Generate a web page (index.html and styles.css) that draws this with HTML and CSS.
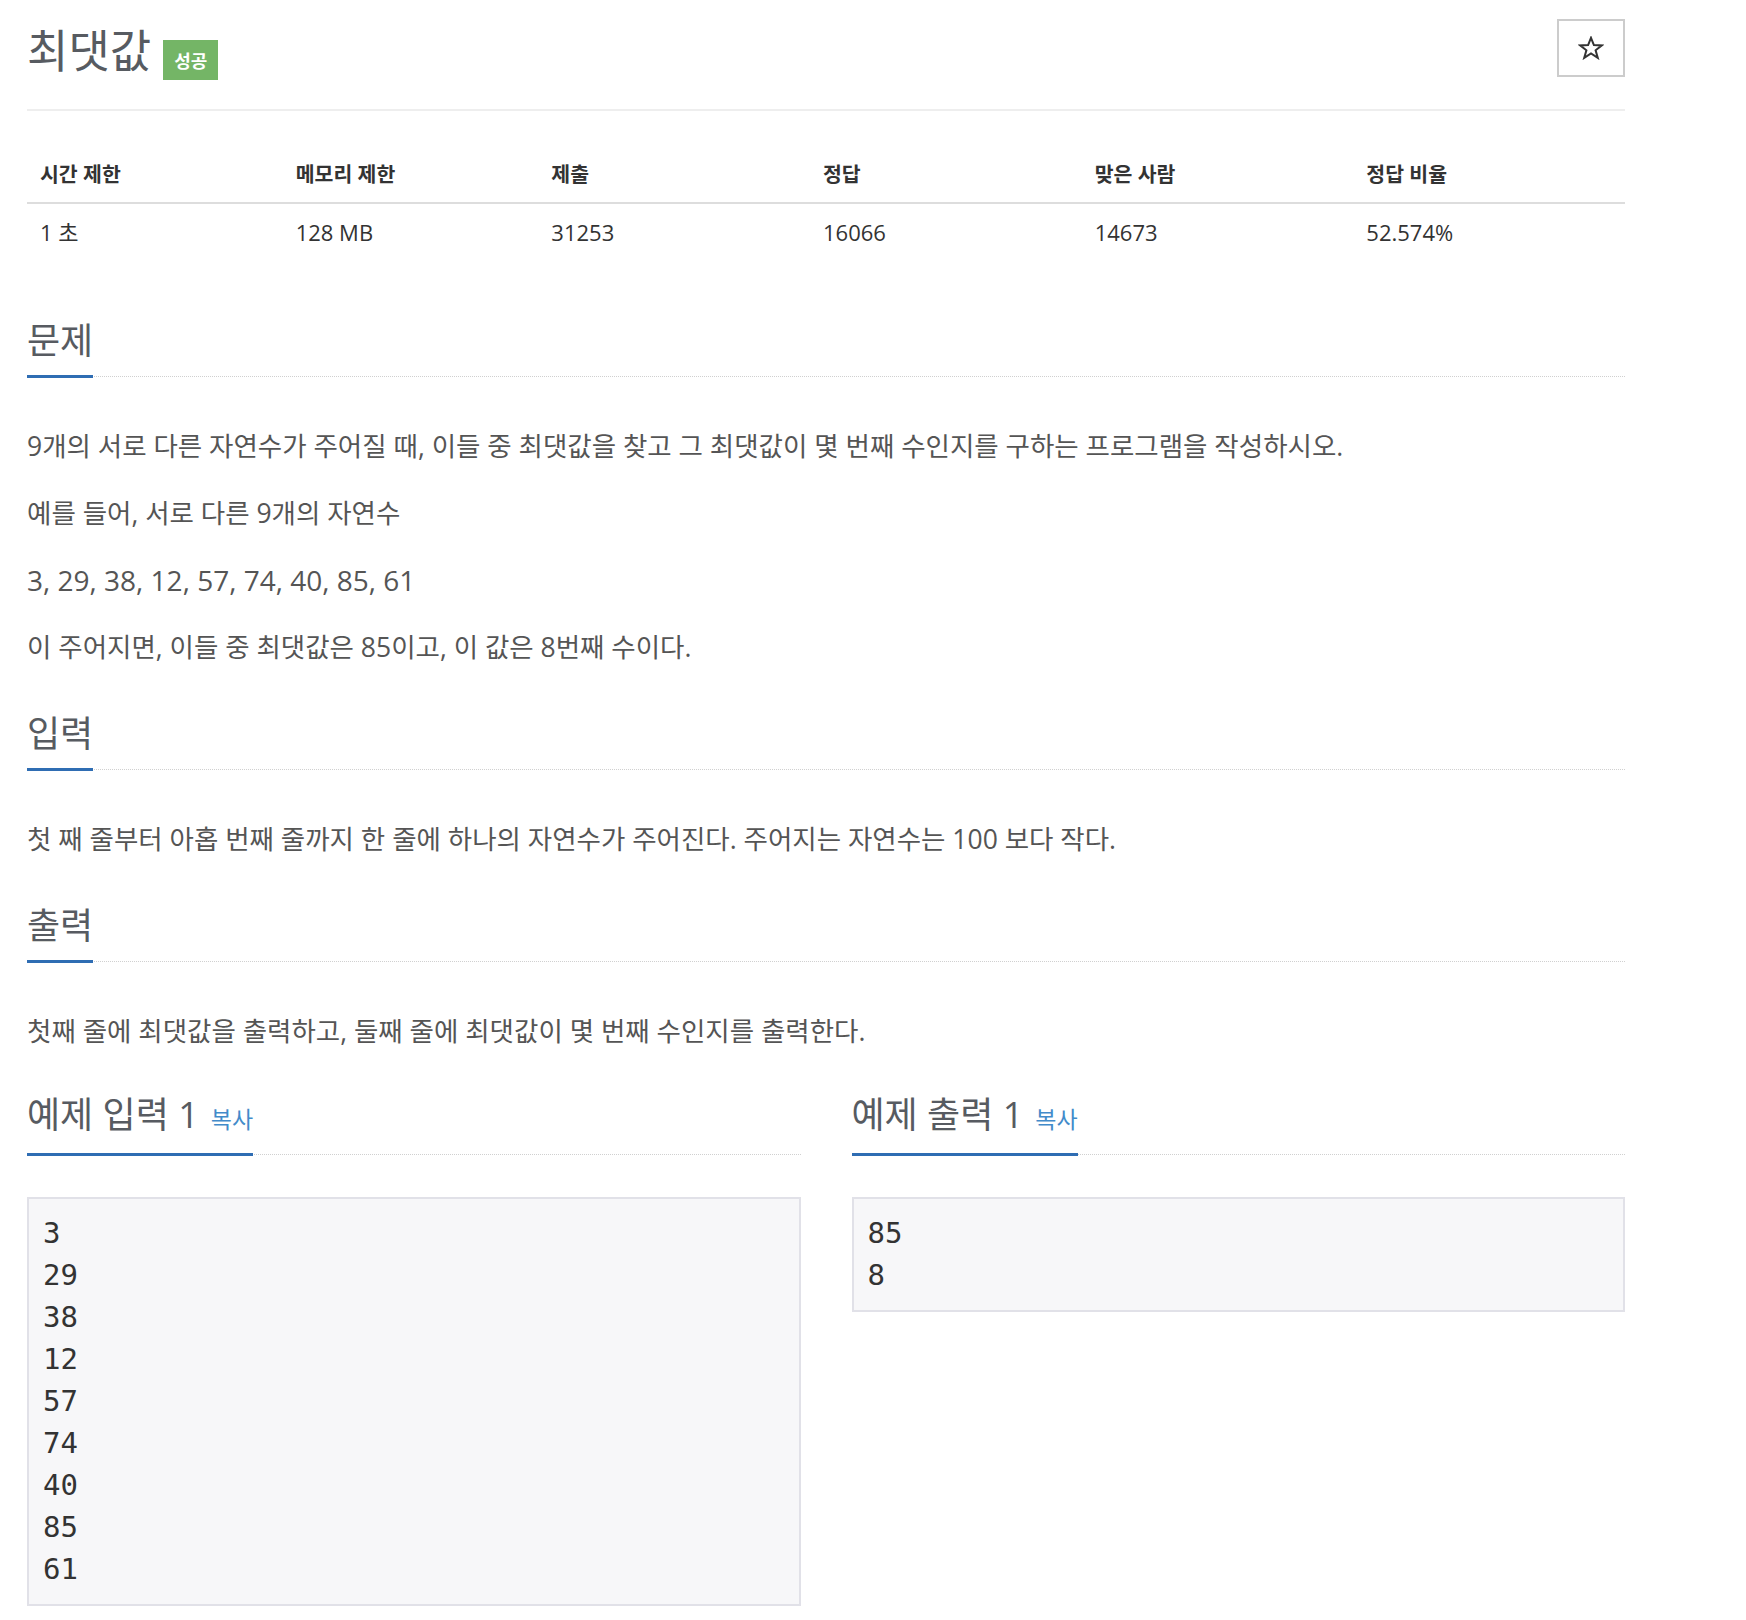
FILE: index.html
```html
<!DOCTYPE html>
<html lang="ko">
<head>
<meta charset="utf-8">
<title>최댓값</title>
<link rel="stylesheet" href="styles.css">
</head>
<body>
<div class="page">
  <div class="page-header">
    <div class="title-row">
      <h1 class="title">최댓값</h1>
      <span class="badge">성공</span>
    </div>
    <button class="star-btn" type="button" aria-label="즐겨찾기">
      <svg width="26" height="24" viewBox="0 0 26 24"><path d="M13 1.8 L15.9 9.1 L23.9 9.4 L17.6 14.3 L19.8 21.9 L13 17.5 L6.2 21.9 L8.4 14.3 L2.1 9.4 L10.1 9.1 Z" fill="none" stroke="#333" stroke-width="2" stroke-linejoin="miter"/></svg>
    </button>
  </div>

  <table class="info">
    <thead>
      <tr>
        <th class="w16">시간 제한</th>
        <th class="w16">메모리 제한</th>
        <th class="w17">제출</th>
        <th class="w17">정답</th>
        <th class="w17">맞은 사람</th>
        <th class="w17">정답 비율</th>
      </tr>
    </thead>
    <tbody>
      <tr>
        <td>1 초</td>
        <td>128 MB</td>
        <td>31253</td>
        <td>16066</td>
        <td>14673</td>
        <td>52.574%</td>
      </tr>
    </tbody>
  </table>

  <section class="section">
    <div class="headline"><h2>문제</h2></div>
    <div class="text">
      <p>9개의 서로 다른 자연수가 주어질 때, 이들 중 최댓값을 찾고 그 최댓값이 몇 번째 수인지를 구하는 프로그램을 작성하시오.</p>
      <p>예를 들어, 서로 다른 9개의 자연수</p>
      <p class="nums">3, 29, 38, 12, 57, 74, 40, 85, 61</p>
      <p>이 주어지면, 이들 중 최댓값은 85이고, 이 값은 8번째 수이다.</p>
    </div>
  </section>

  <section class="section">
    <div class="headline"><h2>입력</h2></div>
    <div class="text">
      <p>첫 째 줄부터 아홉 번째 줄까지 한 줄에 하나의 자연수가 주어진다. 주어지는 자연수는 100 보다 작다.</p>
    </div>
  </section>

  <section class="section">
    <div class="headline"><h2>출력</h2></div>
    <div class="text">
      <p>첫째 줄에 최댓값을 출력하고, 둘째 줄에 최댓값이 몇 번째 수인지를 출력한다.</p>
    </div>
  </section>

  <div class="samples">
    <section class="sample">
      <div class="headline"><h2>예제 입력 1<a class="copy" href="#">복사</a></h2></div>
      <pre class="sample-data">3
29
38
12
57
74
40
85
61</pre>
    </section>
    <section class="sample">
      <div class="headline"><h2>예제 출력 1<a class="copy" href="#">복사</a></h2></div>
      <pre class="sample-data">85
8</pre>
    </section>
  </div>
</div>
</body>
</html>
```

FILE: styles.css
```css
* {
  box-sizing: border-box;
}

body {
  margin: 0;
  background: #fff;
  font-family: "Open Sans", "Noto Sans CJK KR", sans-serif;
  color: #555;
}

.page {
  width: 1598px;
  margin-left: 27px;
}

/* header */
.page-header {
  display: flex;
  justify-content: space-between;
  align-items: flex-start;
  padding-bottom: 29px;
  border-bottom: 2px solid #eee;
}

.title-row {
  display: flex;
  align-items: flex-start;
}

.title {
  margin: 23px 0 0 0;
  font-size: 45px;
  line-height: 56px;
  font-weight: 400;
  color: #575b61;
}

.badge {
  display: inline-flex;
  align-items: center;
  justify-content: center;
  margin-top: 40px;
  margin-left: 12px;
  width: 55px;
  height: 40px;
  background: #74b566;
  color: #fff;
  font-size: 18px;
  font-weight: 700;
}

.star-btn {
  margin-top: 19px;
  width: 68px;
  height: 58px;
  background: #fff;
  border: 2px solid #ccc;
  padding: 0;
  display: flex;
  align-items: center;
  justify-content: center;
}

/* info table */
.info {
  width: 100%;
  margin-top: 37px;
  border-collapse: collapse;
  color: #333;
}

.w16 { width: 16%; }
.w17 { width: 17%; }

.info th {
  text-align: left;
  font-size: 20.5px;
  font-weight: 700;
  line-height: 28px;
  padding: 12px 13px 14px 13px;
  border-bottom: 2px solid #ddd;
}

.info td {
  font-size: 22px;
  line-height: 28px;
  padding: 14px 13px;
}

/* sections */
.section {
  margin-top: 59px;
}

.section + .section {
  margin-top: 45px;
}

.headline {
  display: flex;
  border-bottom: 1px dotted #d0d0d0;
  margin-bottom: 49px;
}

.headline h2 {
  margin: 0 0 -2px 0;
  font-size: 36px;
  line-height: 44px;
  font-weight: 400;
  color: #575b61;
  padding-bottom: 12px;
  border-bottom: 3px solid #2f6db3;
}

.text p {
  margin: 0 0 27px 0;
  font-size: 26.5px;
  line-height: 40px;
  color: #555;
}

.text p.nums {
  font-size: 28px;
}

.text p:last-child {
  margin-bottom: 0;
}

.copy {
  margin-left: 12px;
  font-size: 23px;
  color: #428bca;
  text-decoration: none;
}

/* samples */
.samples {
  display: grid;
  grid-template-columns: 1fr 1fr;
  column-gap: 51px;
  align-items: start;
  margin-top: 42px;
}

.sample .headline {
  margin-bottom: 42px;
}

.sample-data {
  margin: 0;
  padding: 13px 14px 14px 14px;
  background: #f7f7f9;
  border: 2px solid #e1e1e8;
  font-family: "DejaVu Sans Mono", monospace;
  font-size: 29px;
  line-height: 42px;
  color: #333;
}
```
